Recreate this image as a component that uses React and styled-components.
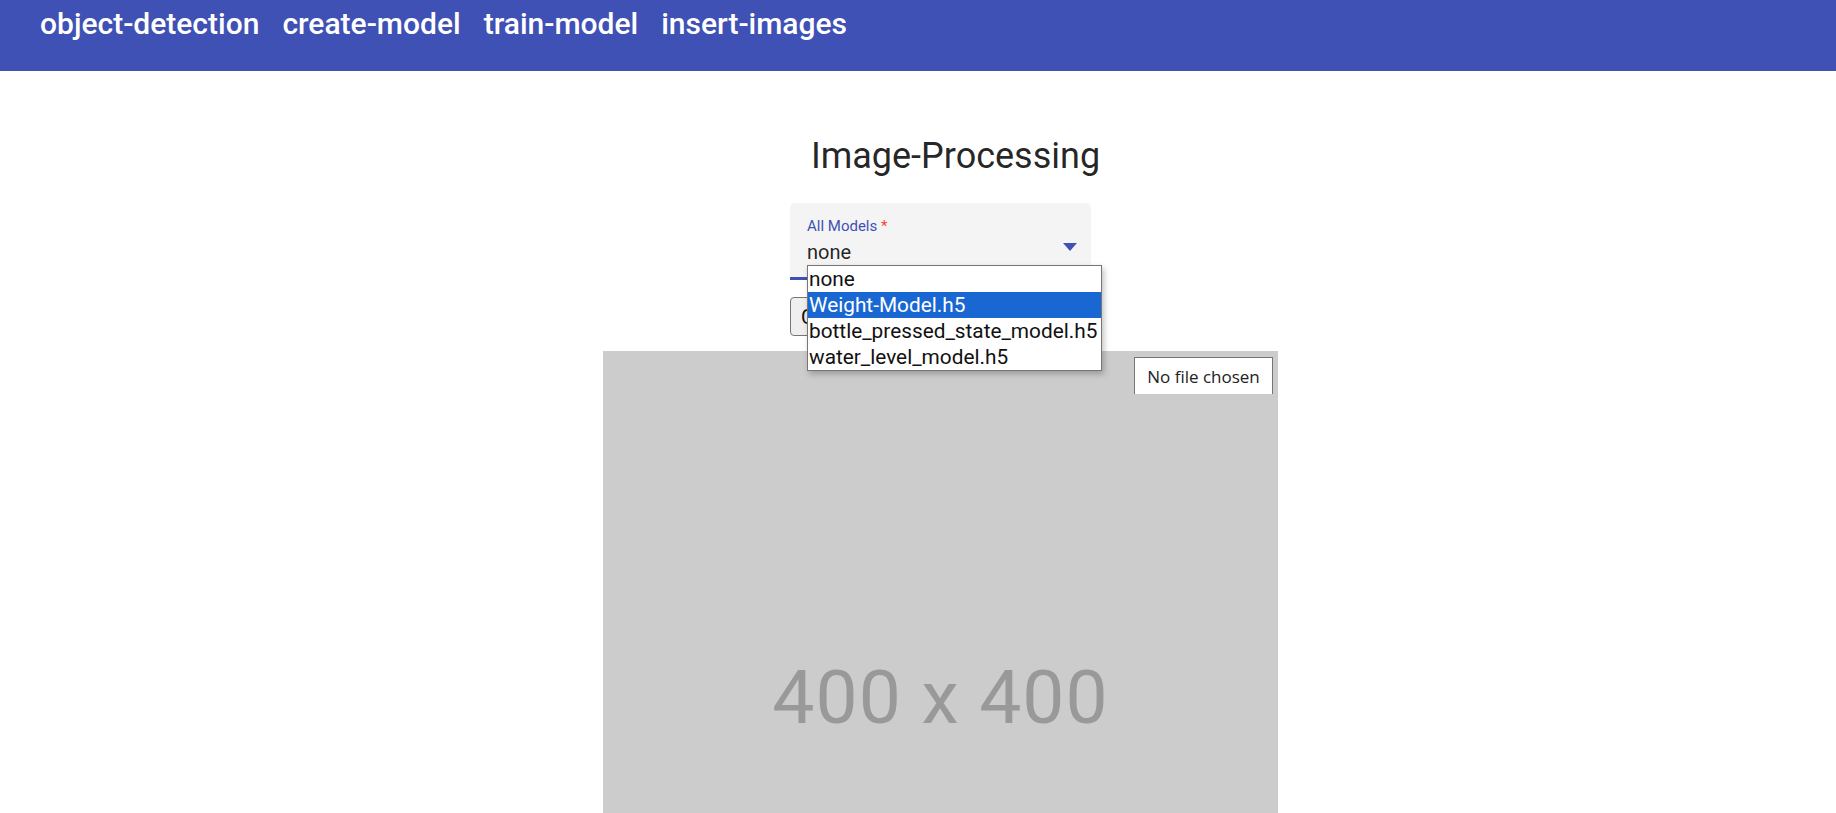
import React from "react";
import styled, { createGlobalStyle } from "styled-components";

const GlobalStyle = createGlobalStyle`
  * { box-sizing: border-box; }
  html, body { margin: 0; padding: 0; background: #fff; overflow: hidden; }
  body { font-family: Roboto, "Liberation Sans", sans-serif; }
`;

//--- STYLED COMPONENTS ---//

const AppBar = styled.header`
  height: 71px;
  background-color: #3f51b5;
  display: flex;
  align-items: flex-start;
  padding: 4px 0 0 40px;
  gap: 23px;
`;

const NavLink = styled.a`
  color: #fff;
  font-size: 30px;
  font-weight: 500;
  line-height: 40px;
  text-decoration: none;
  cursor: pointer;
`;

const Main = styled.main`
  display: flex;
  flex-direction: column;
  align-items: center;
  padding-left: 45px;
`;

const Title = styled.h1`
  margin: 64px 0 0 30px;
  font-size: 36px;
  font-weight: 400;
  line-height: 42px;
  color: rgba(0, 0, 0, 0.87);
`;

const Controls = styled.div`
  position: relative;
  width: 301px;
  margin-top: 26px;
  display: flex;
  flex-direction: column;
  align-items: flex-start;
`;

const FilledSelect = styled.div`
  width: 100%;
  height: 77px;
  background: #f4f4f4;
  border-radius: 5px 5px 0 0;
  border-bottom: 3px solid #3f51b5;
  padding: 14px 17px 0;
  position: relative;
`;

const Label = styled.label`
  display: block;
  font-size: 15px;
  line-height: 18px;
  color: #3f51b5;

  span {
    color: #f44336;
  }
`;

const Value = styled.div`
  font-size: 20px;
  line-height: 24px;
  color: rgba(0, 0, 0, 0.87);
  margin-top: 5px;
`;

const Arrow = styled.svg`
  position: absolute;
  right: 14px;
  top: 40px;
  width: 14px;
  height: 8px;
  fill: #3f51b5;
`;

const SubmitButton = styled.button`
  margin-top: 17px;
  height: 39px;
  padding: 0 10px;
  font-family: inherit;
  font-size: 20px;
  color: #111;
  background: #efefef;
  border: 1px solid #767676;
  border-radius: 4px;
`;

const OptionList = styled.ul`
  position: absolute;
  left: 17px;
  top: 62px;
  width: 295px;
  margin: 0;
  padding: 0;
  list-style: none;
  background: #fff;
  border: 1px solid #767676;
  box-shadow: 2px 3px 6px rgba(0, 0, 0, 0.25);
  z-index: 10;
`;

const Option = styled.li`
  height: 26px;
  line-height: 26px;
  padding-left: 1px;
  font-size: 20.8px;
  white-space: nowrap;
  color: ${({ $active }) => ($active ? "#fff" : "#111")};
  background: ${({ $active }) => ($active ? "#1967d2" : "transparent")};
`;

const Placeholder = styled.div`
  position: relative;
  width: 675px;
  height: 675px;
  margin-top: 15px;
  padding-top: 16px;
  background: #cccccc;
  display: flex;
  align-items: center;
  justify-content: center;
`;

const PlaceholderText = styled.span`
  font-family: Roboto, "Liberation Sans", sans-serif;
  font-size: 75px;
  color: #999999;
  letter-spacing: 1px;
`;

const FileInput = styled.div`
  position: absolute;
  top: 6px;
  right: 5px;
  width: 139px;
  height: 37px;
  background: #fff;
  border: 1px solid #767676;
  border-bottom: none;
  font-family: "Open Sans", "Noto Sans", sans-serif;
  font-size: 17px;
  color: #222;
  display: flex;
  align-items: center;
  justify-content: center;
`;

//--- COMPONENT ---//

const models = [
  "none",
  "Weight-Model.h5",
  "bottle_pressed_state_model.h5",
  "water_level_model.h5",
];

const App = () => {
  return (
    <>
      <GlobalStyle />
      <AppBar>
        <NavLink>object-detection</NavLink>
        <NavLink>create-model</NavLink>
        <NavLink>train-model</NavLink>
        <NavLink>insert-images</NavLink>
      </AppBar>
      <Main>
        <Title>Image-Processing</Title>
        <Controls>
          <FilledSelect>
            <Label>
              All Models <span>*</span>
            </Label>
            <Value>none</Value>
            <Arrow viewBox="0 0 14 8">
              <path d="M0 0h14L7 8z" />
            </Arrow>
          </FilledSelect>
          <SubmitButton>Classify</SubmitButton>
          <OptionList>
            {models.map((m) => (
              <Option key={m} $active={m === "Weight-Model.h5"}>
                {m}
              </Option>
            ))}
          </OptionList>
        </Controls>
        <Placeholder>
          <PlaceholderText>400 x 400</PlaceholderText>
          <FileInput>No file chosen</FileInput>
        </Placeholder>
      </Main>
    </>
  );
};

export default App;
